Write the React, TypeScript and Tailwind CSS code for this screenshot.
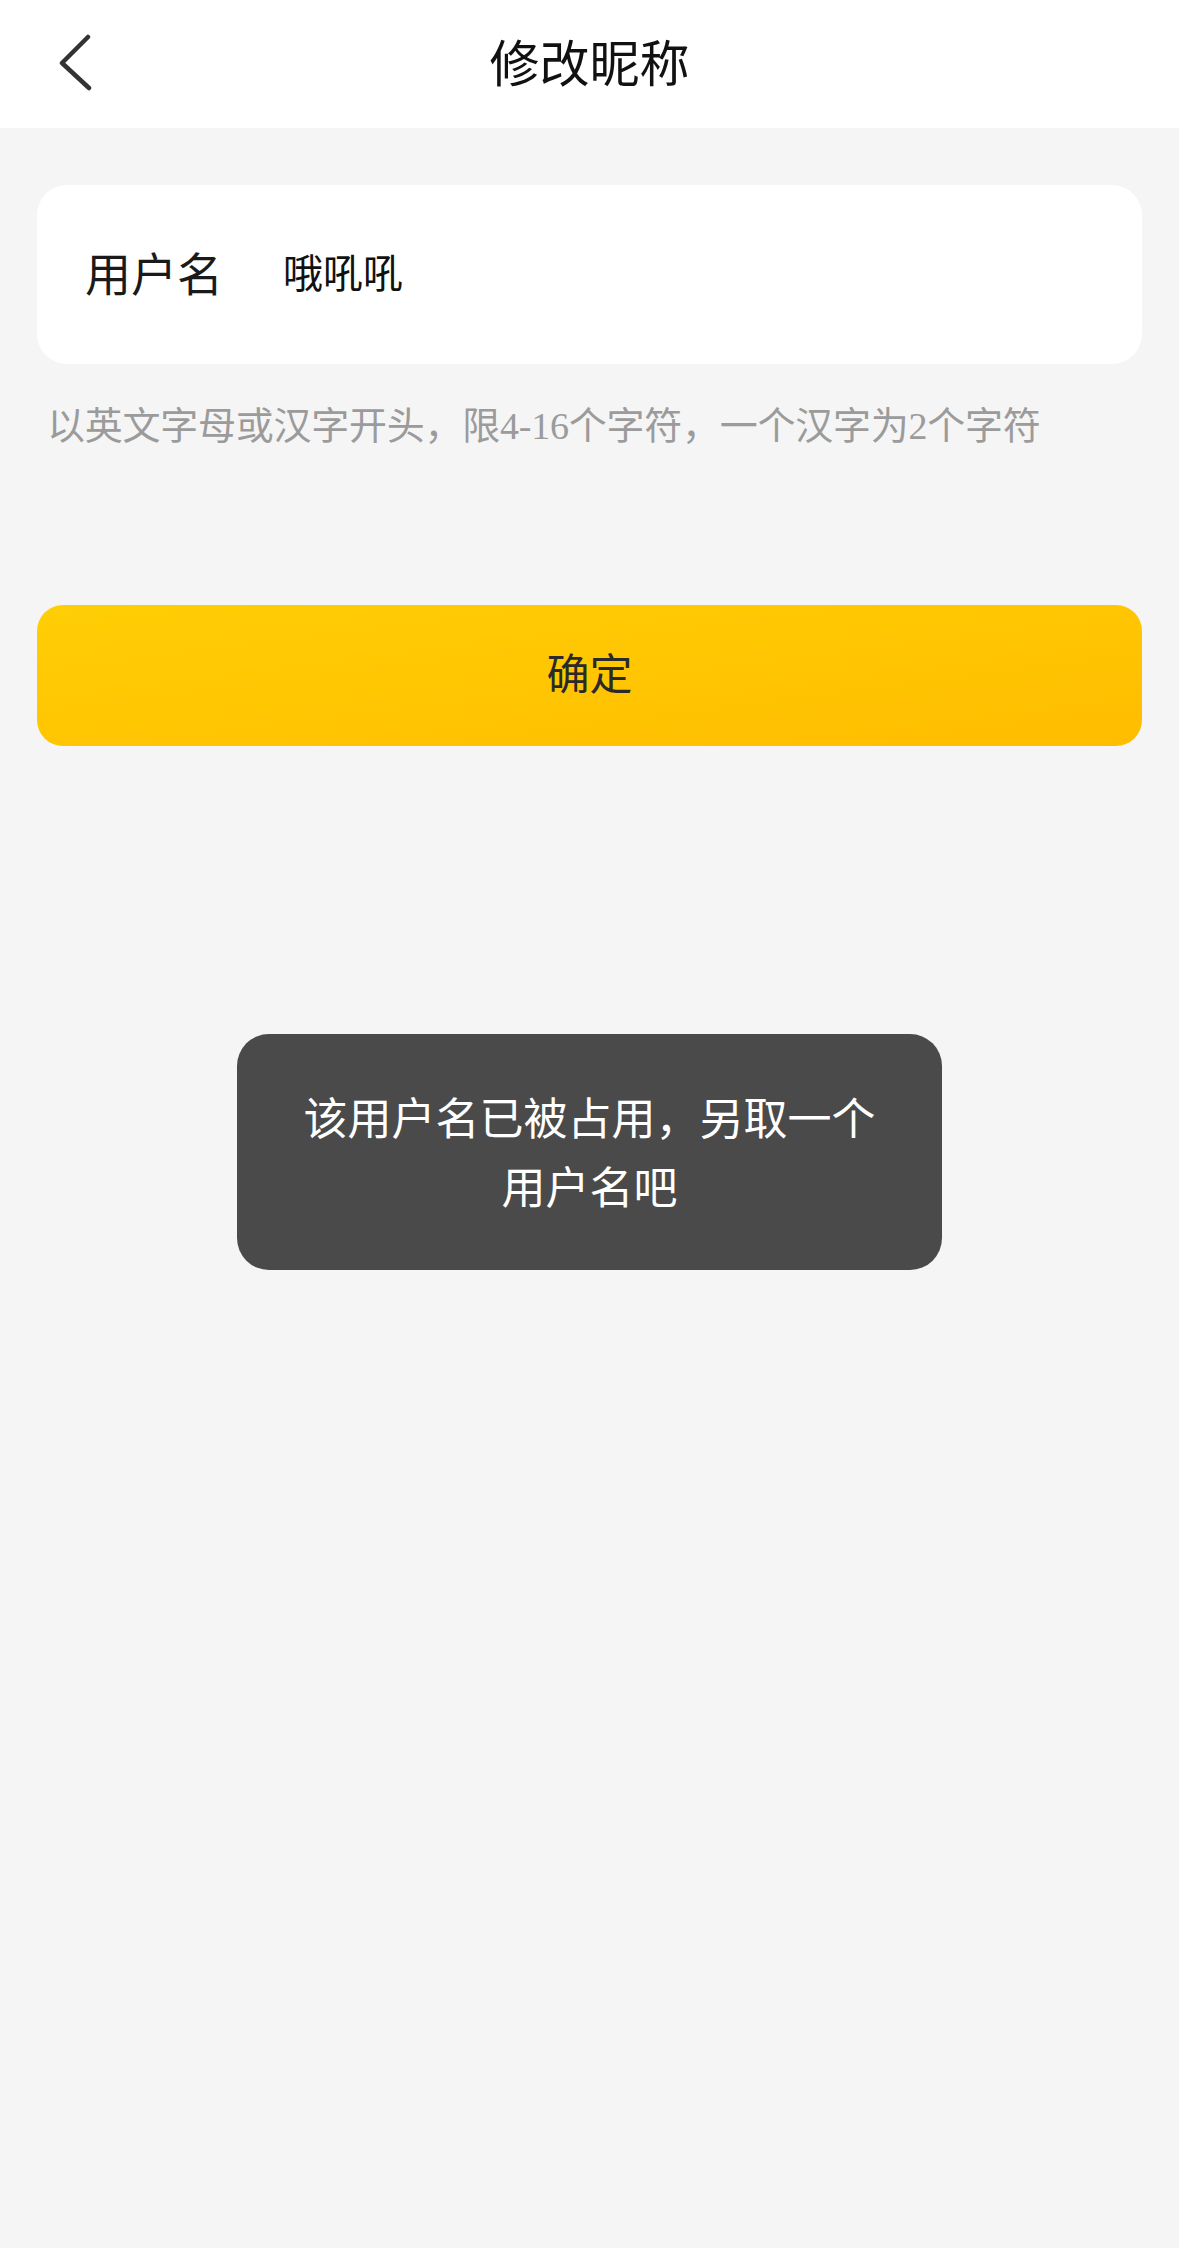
import React from "react";

export default function App() {
  const font = { fontFamily: '"Noto Sans CJK SC", "Noto Sans", sans-serif' };
  return (
    <div className="w-[1179px] min-h-[2248px] bg-[#f5f5f5] flex flex-col" style={font}>
      <div className="h-[128px] bg-white grid grid-cols-[1fr_auto_1fr] items-center">
        <div className="flex items-center">
          <svg className="ml-[55px]" width="40" height="60" viewBox="0 0 40 60" fill="none">
            <polyline points="33,3 7,29 34,54" stroke="#333333" strokeWidth="4.5" strokeLinecap="round" strokeLinejoin="round" />
          </svg>
        </div>
        <div className="text-[50px] leading-[60px] text-[#111111] pb-[8px]">修改昵称</div>
        <div />
      </div>

      <div className="px-[37px] flex flex-col">
        <div className="mt-[57px] h-[179px] rounded-[30px] bg-white flex items-center pl-[48px] pb-[8px]">
          <span className="text-[46px] leading-[56px] text-[#1a1a1a]">用户名</span>
          <span className="ml-[60px] text-[40px] leading-[50px] text-[#111111]">哦吼吼</span>
        </div>

        <div className="mt-[35px] ml-[10px] text-[38px] tracking-[-0.25px] leading-[48px] text-[#9b9b9b] whitespace-nowrap">
          以英文字母或汉字开头，限<span style={{ fontFamily: '"Liberation Serif", serif' }}>4-16</span>个字符，一个汉字为<span style={{ fontFamily: '"Liberation Serif", serif' }}>2</span>个字符
        </div>

        <div className="mt-[155px] h-[141px] rounded-[26px] bg-gradient-to-br from-[#ffce05] to-[#ffbd00] flex items-center justify-center pb-[10px]">
          <span className="text-[43px] leading-[52px] text-[#2a2a2a]">确定</span>
        </div>

        <div className="mt-[288px] self-center w-[705px] h-[236px] rounded-[32px] bg-[#4a4a4a] flex items-center justify-center px-[62px] pb-[2px]">
          <div className="text-[44px] leading-[69px] text-white text-center">
            该用户名已被占用，另取一个用户名吧
          </div>
        </div>
      </div>
    </div>
  );
}
